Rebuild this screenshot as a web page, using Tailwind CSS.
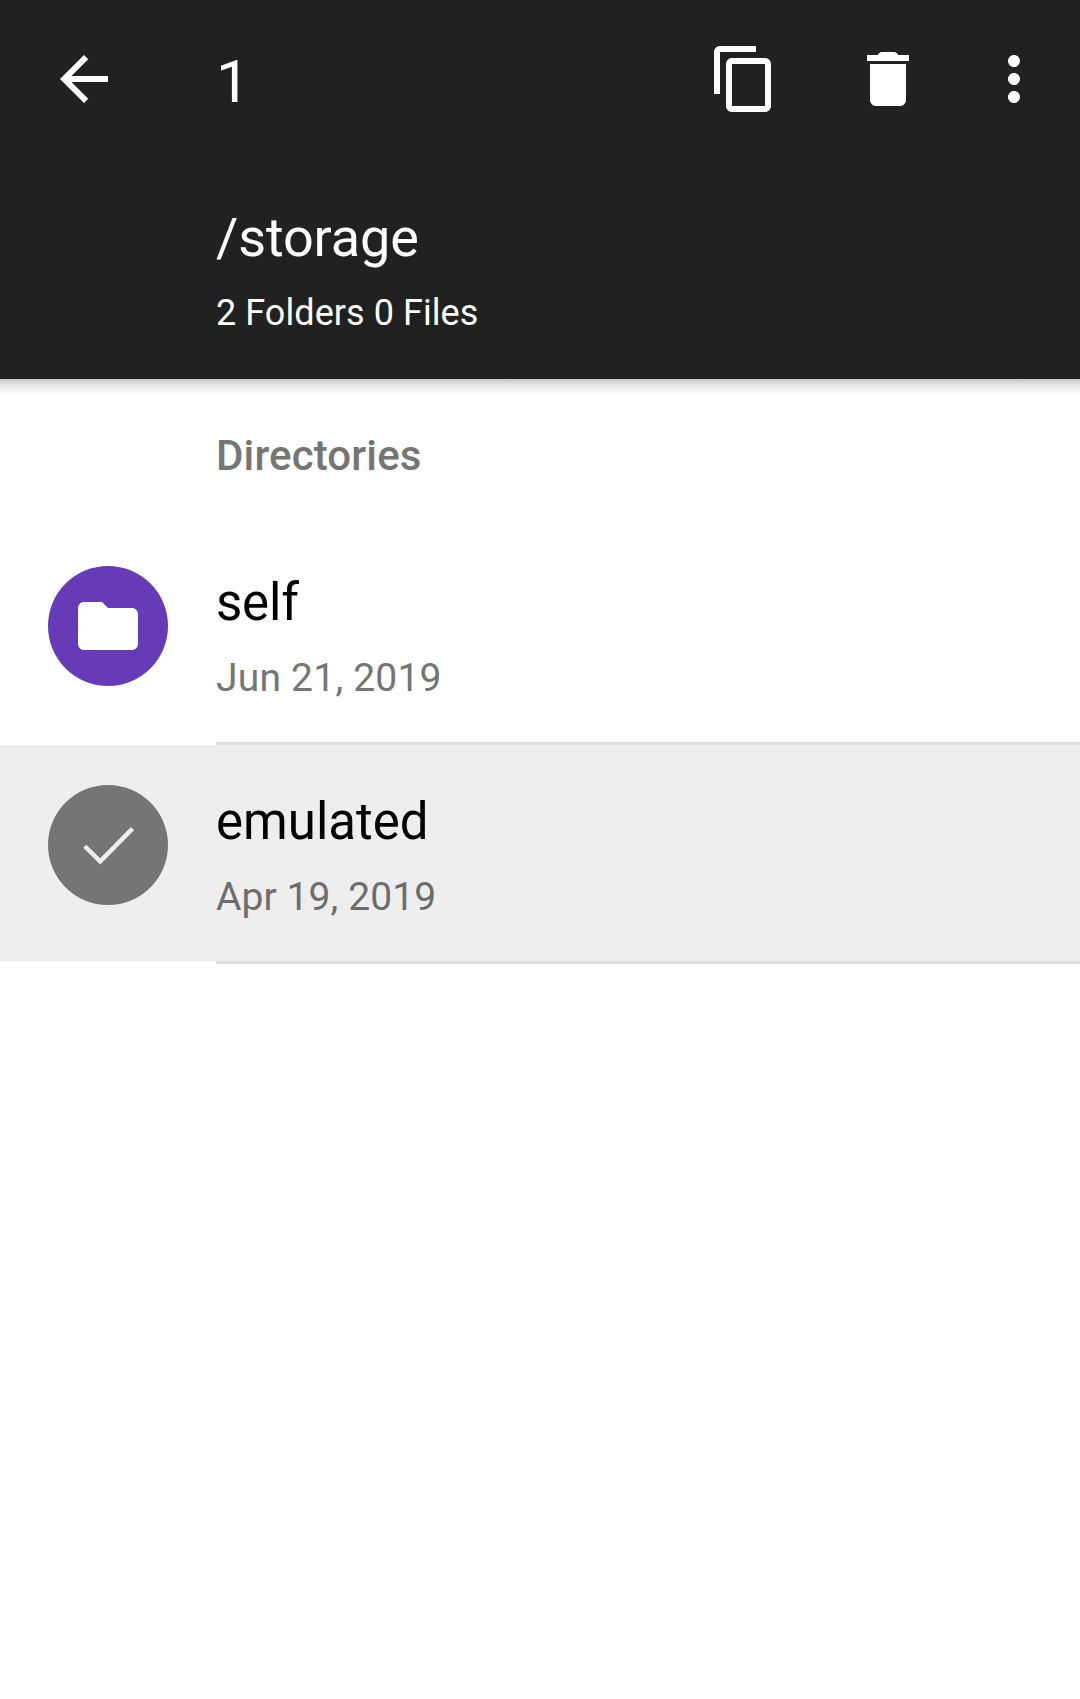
<!DOCTYPE html>
<html lang="en">
<head>
<meta charset="utf-8">
<title>Storage</title>
<script src="https://cdn.jsdelivr.net/npm/@tailwindcss/browser@4"></script>
</head>
<body class="bg-white font-['Roboto',sans-serif] text-black">
<div class="flex min-h-screen flex-col">
  <header class="h-[379px] bg-[#212121] text-white">
    <div class="flex h-[158px] items-center pr-[30px] pl-12">
      <svg class="size-[72px]" viewBox="0 0 24 24" fill="currentColor"><path d="M20 11H7.83l5.59-5.59L12 4l-8 8 8 8 1.41-1.41L7.83 13H20v-2z"/></svg>
      <span class="ml-24 grow pt-[5px] text-[60px] leading-none">1</span>
      <svg class="size-[72px]" viewBox="0 0 24 24" fill="currentColor"><path d="M16 1H4c-1.1 0-2 .9-2 2v14h2V3h12V1zm3 4H8c-1.1 0-2 .9-2 2v14c0 1.1.9 2 2 2h11c1.1 0 2-.9 2-2V7c0-1.1-.9-2-2-2zm0 16H8V7h11v14z"/></svg>
      <svg class="ml-[72px] size-[72px]" viewBox="0 0 24 24" fill="currentColor"><path d="M6 19c0 1.1.9 2 2 2h8c1.1 0 2-.9 2-2V7H6v12zM19 4h-3.5l-.71-.71c-.18-.18-.44-.29-.7-.29H9.910c-.26 0-.52.11-.7.29L8.500 4H5v2h14V4z"/></svg>
      <svg class="ml-[54px] size-[72px]" viewBox="0 0 24 24" fill="currentColor"><path d="M12 8c1.1 0 2-.9 2-2s-.9-2-2-2-2 .9-2 2 .9 2 2 2zm0 2c-1.1 0-2 .9-2 2s.9 2 2 2 2-.9 2-2-.9-2-2-2zm0 6c-1.1 0-2 .9-2 2s.9 2 2 2 2-.9 2-2-.9-2-2-2z"/></svg>
    </div>
    <div class="pt-12 pl-[216px]">
      <h1 class="text-[54px] leading-[64px] tracking-[-0.12px]">/storage</h1>
      <p class="mt-[19px] text-[36px] leading-[48px] tracking-[0.06px]">2 Folders 0 Files</p>
    </div>
  </header>
  <div class="h-4 bg-linear-to-b from-[#c8c8c8] via-[#ebebeb] via-45% to-white"></div>
  <main>
    <h2 class="h-[131px] pt-[37px] pl-[216px] text-[42px] leading-[48px] font-medium tracking-[0.14px] text-[#757575]">Directories</h2>
    <ul>
      <li>
        <div class="flex h-[216px] items-start pl-12">
          <div class="mt-10 flex size-[120px] items-center justify-center rounded-full bg-[#673ab7]">
            <svg class="size-[72px]" viewBox="0 0 24 24" fill="white"><path d="M10 4H4c-1.1 0-1.990.9-1.990 2L2 18c0 1.100.9 2 2 2h16c1.100 0 2-.9 2-2V8c0-1.100-.9-2-2-2h-8l-2-2z"/></svg>
          </div>
          <div class="pt-[47px] pl-12">
            <div class="text-[51px] leading-[60px] tracking-[-0.2px]">self</div>
            <div class="mt-[21px] text-[39px] leading-[48px] tracking-[0.22px] text-[#757575]">Jun 21, 2019</div>
          </div>
        </div>
        <div class="ml-[216px] h-[3px] bg-[#dfdfdf]"></div>
      </li>
      <li>
        <div class="flex h-[216px] items-start bg-[#eeeeee] pl-12">
          <div class="mt-10 flex size-[120px] items-center justify-center rounded-full bg-[#757575]">
            <svg class="size-[120px]" viewBox="0 0 120 120" fill="none" stroke="#eeeeee" stroke-width="4.4"><path d="M36.800 61.200L52.200 76.300L84.500 43.600"/></svg>
          </div>
          <div class="pt-[47px] pl-12">
            <div class="text-[51px] leading-[60px]">emulated</div>
            <div class="mt-[21px] text-[39px] leading-[48px] tracking-[0.09px] text-[#6d6d6d]">Apr 19, 2019</div>
          </div>
        </div>
        <div class="ml-[216px] h-[3px] bg-[#dfdfdf]"></div>
      </li>
    </ul>
  </main>
</div>
</body>
</html>
